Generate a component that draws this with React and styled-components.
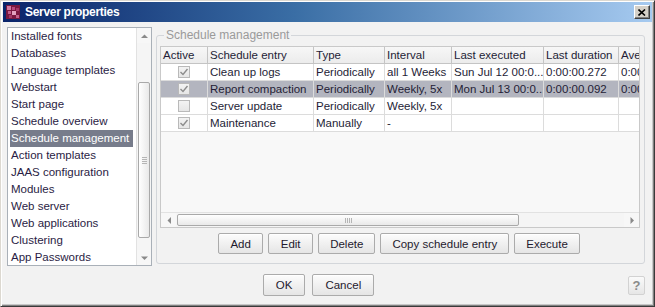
import styled, { createGlobalStyle } from 'styled-components';

const GlobalStyle = createGlobalStyle`
  * { box-sizing: border-box; }
  html, body { margin: 0; padding: 0; background: #fff; }
  body {
    font-family: "Liberation Sans", Arial, sans-serif;
    font-size: 11.5px;
    color: #241d36;
  }
`;

const Frame = styled.div`
  width: 655px;
  height: 307px;
  display: flex;
  flex-direction: column;
  background: #f2f2f2;
  border: 1px solid;
  border-color: #dcd8d0 #3a3a3a #3a3a3a #dcd8d0;
  box-shadow: inset 1px 1px 0 #ffffff, inset -1px -1px 0 #808080, inset -2px -2px 0 #c8c8c8;
  padding: 1px 2px 3px 2px;
`;

const TitleBar = styled.div`
  height: 20px;
  flex: none;
  display: flex;
  align-items: center;
  padding: 0 2px 0 3px;
  background: linear-gradient(to right, #0a246a 0%, #3a6ea5 45%, #a6caf0 100%);
`;

const TitleText = styled.span`
  margin-left: 5px;
  color: #fff;
  font-weight: bold;
  font-size: 12px;
  letter-spacing: -0.3px;
`;

const CloseButton = styled.button`
  margin-left: auto;
  width: 16px;
  height: 14px;
  padding: 0;
  display: flex;
  align-items: center;
  justify-content: center;
  background: #d4d0c8;
  border: 1px solid;
  border-color: #ffffff #404040 #404040 #ffffff;
  box-shadow: inset -1px -1px 0 #808080;
`;

const Body = styled.div`
  display: flex;
  gap: 4px;
  padding: 5px 0 0 4px;
  height: 244px;
  flex: none;
`;

const ListBox = styled.div`
  width: 145px;
  height: 239px;
  display: flex;
  background: #fff;
  border: 1px solid #a9b0b8;
`;

const ListItems = styled.div`
  flex: 1;
  padding: 0 3px 0 2px;
`;

const ListItem = styled.div`
  height: 17px;
  line-height: 17px;
  padding-left: 1px;
  white-space: nowrap;
  background: ${p => (p.$selected ? '#777c8b' : 'transparent')};
  color: ${p => (p.$selected ? '#ffffff' : '#2a1c44')};
`;

const VScroll = styled.div`
  width: 15px;
  display: flex;
  flex-direction: column;
  background: #f5f5f5;
  border-left: 1px solid #e2e2e2;
`;

const ArrowButton = styled.div`
  flex: none;
  width: ${p => (p.$horizontal ? '15px' : 'auto')};
  height: ${p => (p.$horizontal ? 'auto' : '15px')};
  display: flex;
  align-items: center;
  justify-content: center;
  background: #f7f7f7;
`;

const VTrack = styled.div`
  flex: 1;
  display: flex;
  flex-direction: column;
  padding: 39px 1px 0 1px;
`;

const VThumb = styled.div`
  height: 156px;
  display: flex;
  flex-direction: column;
  align-items: center;
  justify-content: center;
  gap: 1px;
  background: linear-gradient(to right, #ffffff, #e9e9e9);
  border: 1px solid #a9a9a9;
  border-radius: 2px;
`;

const GripLine = styled.span`
  display: block;
  width: ${p => (p.$vertical ? '1px' : '5px')};
  height: ${p => (p.$vertical ? '5px' : '1px')};
  background: #b5b5b5;
`;

const Group = styled.fieldset`
  margin: 1px 0 0 0;
  width: 489px;
  height: 236px;
  padding: 4px 4px 9px 3px;
  border: 1px solid #d3d6da;
  border-radius: 3px;
  display: flex;
  flex-direction: column;
  min-width: 0;
`;

const Legend = styled.legend`
  margin-left: 4px;
  padding: 0 2px;
  line-height: 14px;
  color: #9a9a9a;
  font-size: 12px;
`;

const TableBox = styled.div`
  flex: 1;
  display: flex;
  flex-direction: column;
  border: 1px solid #c9c9c9;
  background: #f8f8f8;
  min-height: 0;
`;

const Viewport = styled.div`
  flex: 1;
  overflow: hidden;
`;

const COLS = '47px 106px 71px 67px 92px 75px 80px';

const Row = styled.div`
  display: grid;
  grid-template-columns: ${COLS};
  width: max-content;
  height: 17px;
  background: ${p => (p.$header ? 'linear-gradient(#f7f7f7, #ebebeb)' : p.$selected ? '#b3b5bf' : '#ffffff')};
`;

const Cell = styled.div`
  padding: 0 2px;
  line-height: 16px;
  white-space: nowrap;
  overflow: hidden;
  border-right: 1px solid ${p => (p.$header ? '#c4c4c4' : '#dcdcdc')};
  border-bottom: 1px solid ${p => (p.$header ? '#c4c4c4' : '#dcdcdc')};
  display: flex;
  align-items: center;
  justify-content: ${p => (p.$center ? 'center' : 'flex-start')};
`;

const Check = styled.span`
  width: 12px;
  height: 12px;
  display: flex;
  align-items: center;
  justify-content: center;
  border: 1px solid #b9b9b9;
  background: linear-gradient(#f3f3f3, #e6e6e6);
`;

const HScroll = styled.div`
  height: 15px;
  flex: none;
  display: flex;
  background: #f5f5f5;
  border-top: 1px solid #e2e2e2;
`;

const HTrack = styled.div`
  flex: 1;
  display: flex;
  padding: 1px 0 1px 1px;
`;

const HThumb = styled.div`
  width: 342px;
  display: flex;
  align-items: center;
  justify-content: center;
  gap: 1px;
  background: linear-gradient(#ffffff, #e9e9e9);
  border: 1px solid #a9a9a9;
  border-radius: 2px;
`;

const ButtonRow = styled.div`
  display: flex;
  justify-content: center;
  gap: 5px;
  margin-top: 5px;
  padding-right: 2px;
`;

const Button = styled.button`
  height: ${p => (p.$tall ? '22px' : '21px')};
  min-width: ${p => (p.$tall ? '40px' : '45px')};
  padding: 0 ${p => (p.$tall ? '12px' : '11px')};
  font-family: inherit;
  font-size: 11.5px;
  color: #1f1a2e;
  background: linear-gradient(#fcfcfc, #e5e5e5);
  border: 1px solid #ababab;
  border-radius: 2px;
  box-shadow: inset 0 1px 0 #fff;
`;

const Footer = styled.div`
  flex: 1;
  display: flex;
  align-items: center;
  padding: 1px 7px 0 0;
`;

const Spacer = styled.div`
  flex: 1;
`;

const FooterButtons = styled.div`
  display: flex;
  gap: 7px;
  margin-left: 6px;
`;

const HelpButton = styled.button`
  width: 17px;
  height: 19px;
  padding: 0;
  font-family: inherit;
  font-weight: bold;
  font-size: 13px;
  color: #8a8a8a;
  background: linear-gradient(#fafafa, #e6e6e6);
  border: 1px solid #d2d2d2;
  border-radius: 2px;
`;

const Arrow = ({ dir }) => {
  const pts = {
    up: '1,5 4.5,1.5 8,5',
    down: '1,1.5 4.5,5 8,1.5',
    left: '5,1 1.5,4.5 5,8',
    right: '1.5,1 5,4.5 1.5,8',
  }[dir];
  const w = dir === 'up' || dir === 'down' ? 9 : 6;
  const h = dir === 'up' || dir === 'down' ? 6 : 9;
  return (
    <svg width={w} height={h} viewBox={`0 0 ${w} ${h}`}>
      <polygon points={pts} fill="#8a8a8a" />
    </svg>
  );
};

const AppIcon = () => (
  <svg width="14" height="14" viewBox="0 0 14 14">
    <rect width="14" height="14" fill="#7a1840" />
    <rect x="1" y="1" width="4" height="4" fill="#d27aa2" />
    <rect x="6" y="2" width="3" height="3" fill="#b84a7c" />
    <rect x="2" y="6" width="3" height="3" fill="#c35f8c" />
    <rect x="6" y="6" width="4" height="4" fill="#e3a0bf" />
    <rect x="10" y="3" width="3" height="3" fill="#a33868" />
    <rect x="3" y="10" width="3" height="3" fill="#a33868" />
    <rect x="10" y="10" width="3" height="3" fill="#c35f8c" />
  </svg>
);

const CheckMark = () => (
  <svg width="10" height="10" viewBox="0 0 10 10">
    <path d="M1.5 5 L4 7.5 L8.5 2" fill="none" stroke="#8c8c8c" strokeWidth="1.4" />
  </svg>
);

const navItems = [
  'Installed fonts',
  'Databases',
  'Language templates',
  'Webstart',
  'Start page',
  'Schedule overview',
  'Schedule management',
  'Action templates',
  'JAAS configuration',
  'Modules',
  'Web server',
  'Web applications',
  'Clustering',
  'App Passwords',
];

const headers = ['Active', 'Schedule entry', 'Type', 'Interval', 'Last executed', 'Last duration', 'Average duration'];

const rows = [
  { active: true, name: 'Clean up logs', type: 'Periodically', interval: 'all 1 Weeks', last: 'Sun Jul 12 00:0...', dur: '0:00:00.272', avg: '0:00:00.272' },
  { active: true, name: 'Report compaction', type: 'Periodically', interval: 'Weekly, 5x', last: 'Mon Jul 13 00:0...', dur: '0:00:00.092', avg: '0:00:00.092', selected: true },
  { active: false, name: 'Server update', type: 'Periodically', interval: 'Weekly, 5x', last: '', dur: '', avg: '' },
  { active: true, name: 'Maintenance', type: 'Manually', interval: '-', last: '', dur: '', avg: '' },
];

export default function App() {
  return (
    <>
      <GlobalStyle />
      <Frame>
        <TitleBar>
          <AppIcon />
          <TitleText>Server properties</TitleText>
          <CloseButton aria-label="Close">
            <svg width="8" height="7" viewBox="0 0 8 7">
              <path d="M0.5 0.5 L7 6.5 M7 0.5 L0.5 6.5" stroke="#000" strokeWidth="1.6" />
            </svg>
          </CloseButton>
        </TitleBar>

        <Body>
          <ListBox>
            <ListItems>
              {navItems.map(item => (
                <ListItem key={item} $selected={item === 'Schedule management'}>{item}</ListItem>
              ))}
            </ListItems>
            <VScroll>
              <ArrowButton><Arrow dir="up" /></ArrowButton>
              <VTrack>
                <VThumb>
                  <GripLine /><GripLine /><GripLine /><GripLine />
                </VThumb>
              </VTrack>
              <ArrowButton><Arrow dir="down" /></ArrowButton>
            </VScroll>
          </ListBox>

          <Group>
            <Legend>Schedule management</Legend>
            <TableBox>
              <Viewport>
                <Row $header>
                  {headers.map(h => <Cell key={h} $header>{h}</Cell>)}
                </Row>
                {rows.map(r => (
                  <Row key={r.name} $selected={r.selected}>
                    <Cell $center>
                      <Check>{r.active && <CheckMark />}</Check>
                    </Cell>
                    <Cell>{r.name}</Cell>
                    <Cell>{r.type}</Cell>
                    <Cell>{r.interval}</Cell>
                    <Cell>{r.last}</Cell>
                    <Cell>{r.dur}</Cell>
                    <Cell>{r.avg}</Cell>
                  </Row>
                ))}
              </Viewport>
              <HScroll>
                <ArrowButton $horizontal><Arrow dir="left" /></ArrowButton>
                <HTrack>
                  <HThumb>
                    <GripLine $vertical /><GripLine $vertical /><GripLine $vertical /><GripLine $vertical />
                  </HThumb>
                </HTrack>
                <ArrowButton $horizontal><Arrow dir="right" /></ArrowButton>
              </HScroll>
            </TableBox>
            <ButtonRow>
              <Button>Add</Button>
              <Button>Edit</Button>
              <Button>Delete</Button>
              <Button>Copy schedule entry</Button>
              <Button>Execute</Button>
            </ButtonRow>
          </Group>
        </Body>

        <Footer>
          <Spacer />
          <FooterButtons>
            <Button $tall>OK</Button>
            <Button $tall>Cancel</Button>
          </FooterButtons>
          <Spacer />
          <HelpButton>?</HelpButton>
        </Footer>
      </Frame>
    </>
  );
}
